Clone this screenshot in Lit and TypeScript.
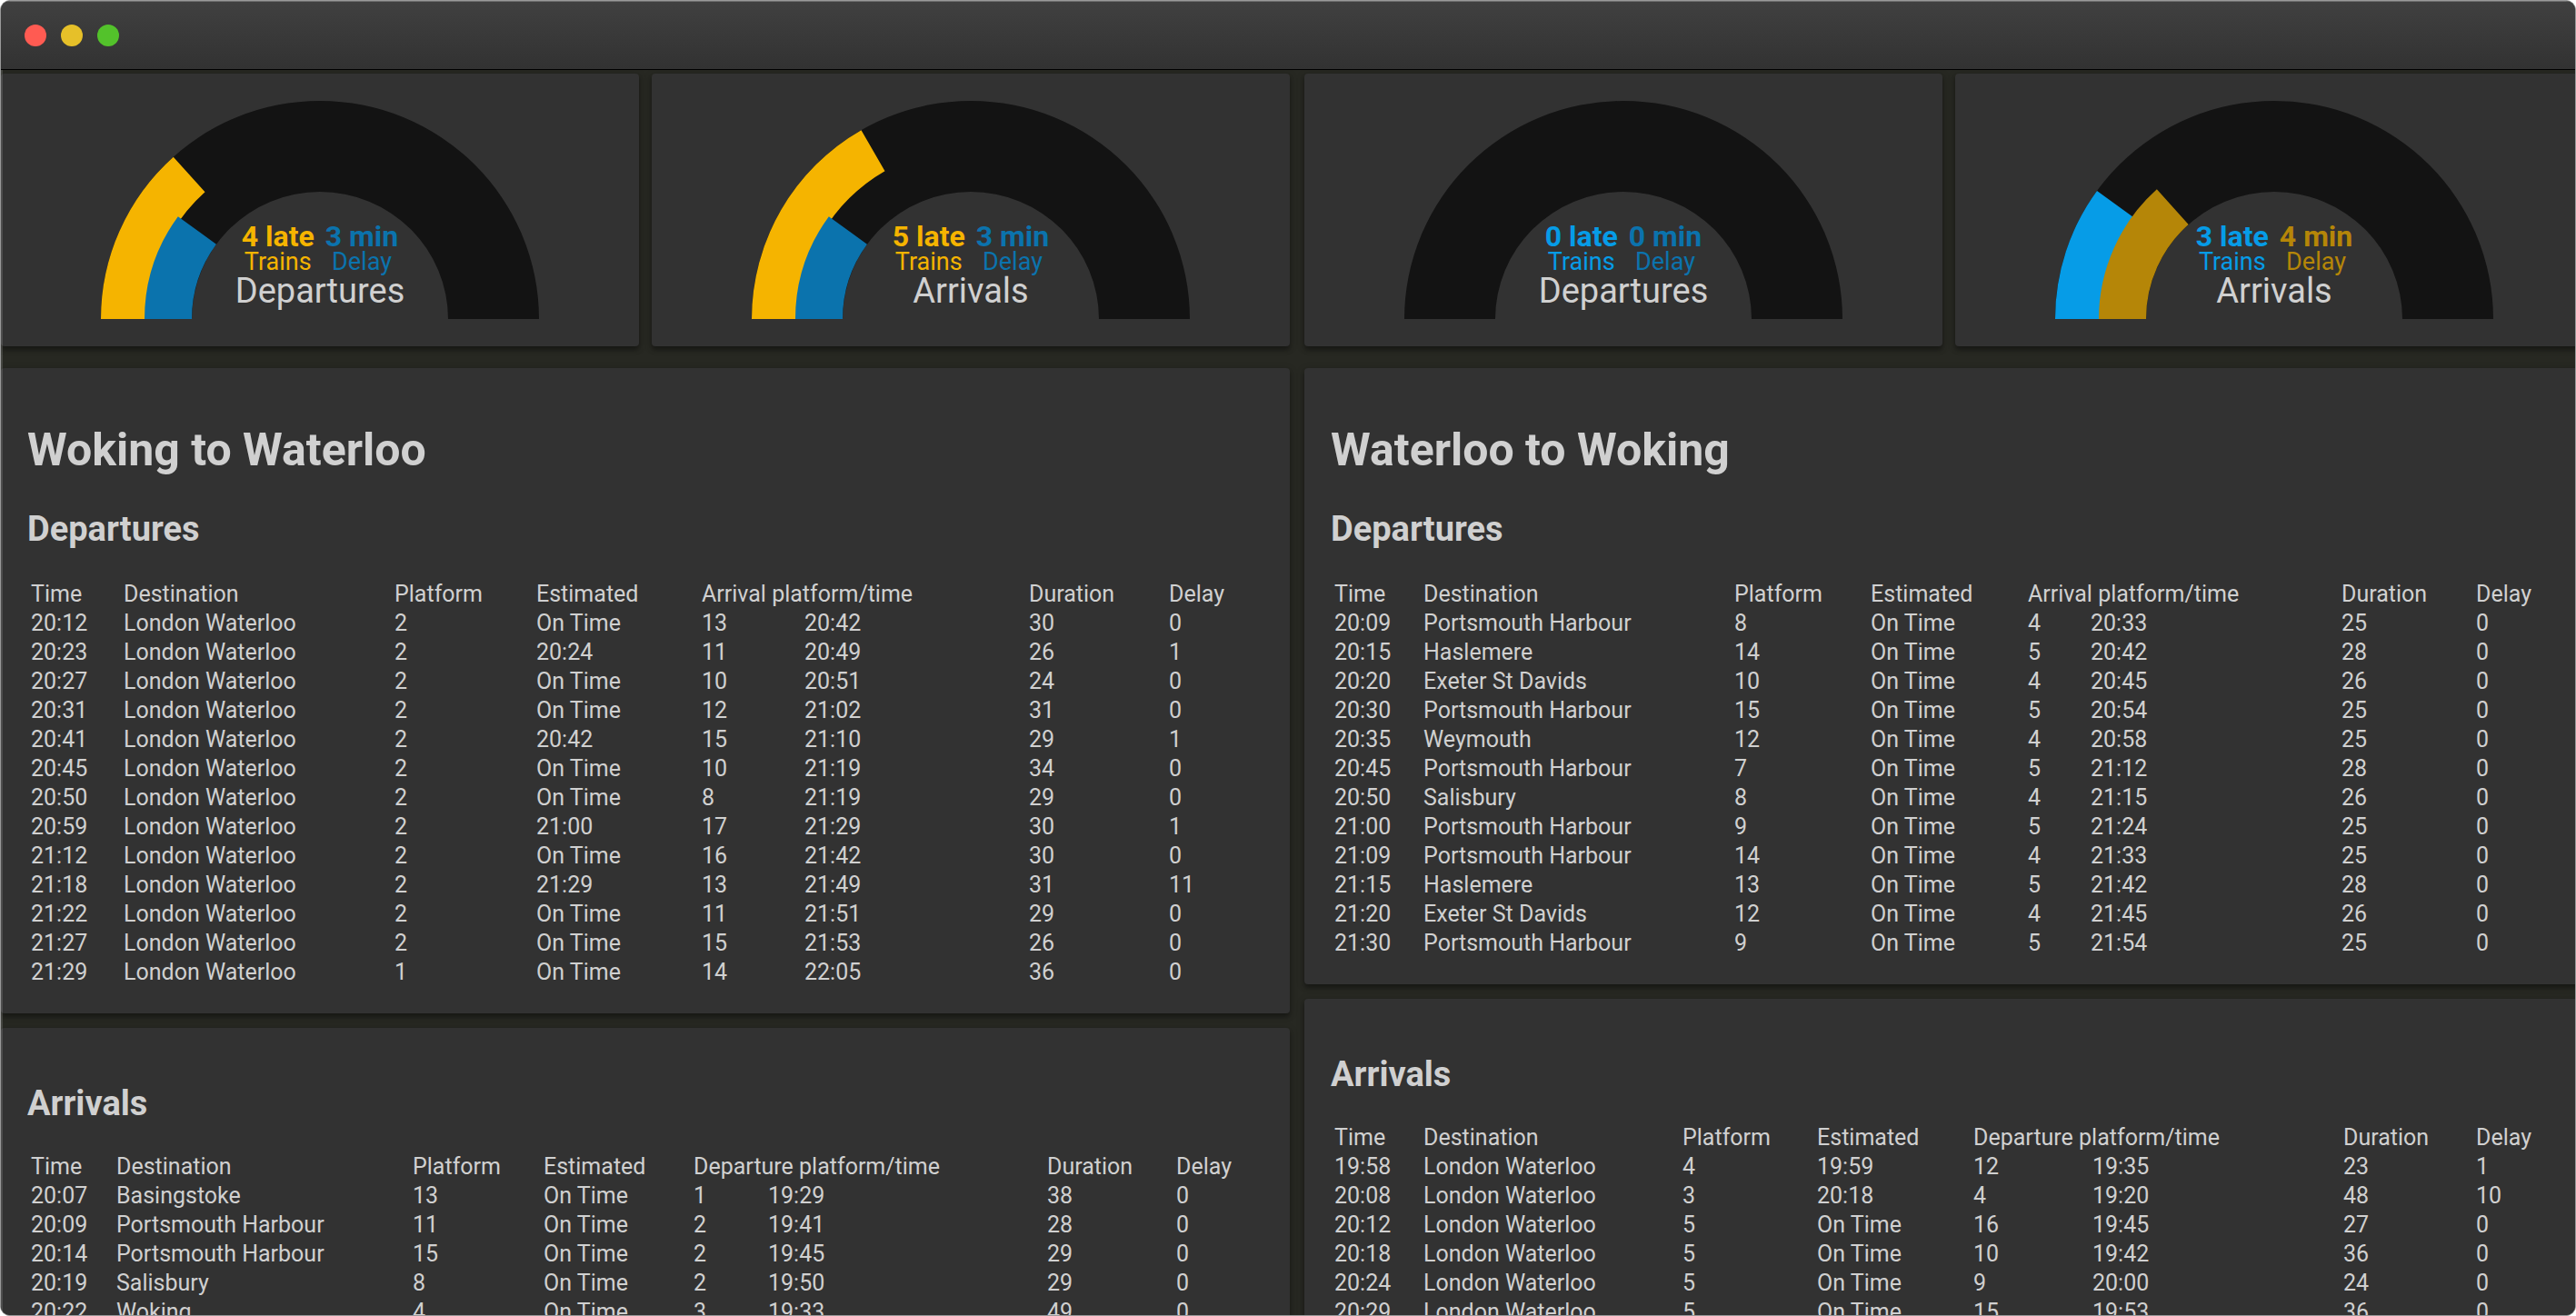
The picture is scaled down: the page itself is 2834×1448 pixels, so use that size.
import { LitElement, html, css, svg } from "lit";
import { customElement, property } from "lit/decorators.js";

type Tone = "amber" | "sky" | "ochre" | "steel";

interface Gauge {
  title: string;
  late: number;
  delay: number;
  lateTone: Tone;
  delayTone: Tone;
}

interface Board {
  title: string;
  via: string;
  /** Column weights; the table scales them to its own width. */
  columns: number[];
  rows: string[][];
}

interface Route {
  name: string;
  gauges: Gauge[];
  boards: Board[];
}

const parse = (text: string): string[][] =>
  text
    .trim()
    .split("\n")
    .map((line) => line.trim().split("|"));

const ROUTES: Route[] = [
  {
    name: "Woking to Waterloo",
    gauges: [
      { title: "Departures", late: 4, delay: 3, lateTone: "amber", delayTone: "steel" },
      { title: "Arrivals", late: 5, delay: 3, lateTone: "amber", delayTone: "steel" },
    ],
    boards: [
      {
        title: "Departures",
        via: "Arrival platform/time",
        columns: [98, 294, 152, 178, 109, 243, 150, 99],
        rows: parse(`
          20:12|London Waterloo|2|On Time|13|20:42|30|0
          20:23|London Waterloo|2|20:24|11|20:49|26|1
          20:27|London Waterloo|2|On Time|10|20:51|24|0
          20:31|London Waterloo|2|On Time|12|21:02|31|0
          20:41|London Waterloo|2|20:42|15|21:10|29|1
          20:45|London Waterloo|2|On Time|10|21:19|34|0
          20:50|London Waterloo|2|On Time|8|21:19|29|0
          20:59|London Waterloo|2|21:00|17|21:29|30|1
          21:12|London Waterloo|2|On Time|16|21:42|30|0
          21:18|London Waterloo|2|21:29|13|21:49|31|11
          21:22|London Waterloo|2|On Time|11|21:51|29|0
          21:27|London Waterloo|2|On Time|15|21:53|26|0
          21:29|London Waterloo|1|On Time|14|22:05|36|0`),
      },
      {
        title: "Arrivals",
        via: "Departure platform/time",
        columns: [90, 322, 140, 161, 78, 303, 138, 91],
        rows: parse(`
          20:07|Basingstoke|13|On Time|1|19:29|38|0
          20:09|Portsmouth Harbour|11|On Time|2|19:41|28|0
          20:14|Portsmouth Harbour|15|On Time|2|19:45|29|0
          20:19|Salisbury|8|On Time|2|19:50|29|0
          20:22|Woking|4|On Time|3|19:33|49|0`),
      },
    ],
  },
  {
    name: "Waterloo to Woking",
    gauges: [
      { title: "Departures", late: 0, delay: 0, lateTone: "sky", delayTone: "steel" },
      { title: "Arrivals", late: 3, delay: 4, lateTone: "sky", delayTone: "ochre" },
    ],
    boards: [
      {
        title: "Departures",
        via: "Arrival platform/time",
        columns: [94, 338, 146, 169, 65, 272, 144, 95],
        rows: parse(`
          20:09|Portsmouth Harbour|8|On Time|4|20:33|25|0
          20:15|Haslemere|14|On Time|5|20:42|28|0
          20:20|Exeter St Davids|10|On Time|4|20:45|26|0
          20:30|Portsmouth Harbour|15|On Time|5|20:54|25|0
          20:35|Weymouth|12|On Time|4|20:58|25|0
          20:45|Portsmouth Harbour|7|On Time|5|21:12|28|0
          20:50|Salisbury|8|On Time|4|21:15|26|0
          21:00|Portsmouth Harbour|9|On Time|5|21:24|25|0
          21:09|Portsmouth Harbour|14|On Time|4|21:33|25|0
          21:15|Haslemere|13|On Time|5|21:42|28|0
          21:20|Exeter St Davids|12|On Time|4|21:45|26|0
          21:30|Portsmouth Harbour|9|On Time|5|21:54|25|0`),
      },
      {
        title: "Arrivals",
        via: "Departure platform/time",
        columns: [94, 281, 144, 168, 127, 272, 142, 95],
        rows: parse(`
          19:58|London Waterloo|4|19:59|12|19:35|23|1
          20:08|London Waterloo|3|20:18|4|19:20|48|10
          20:12|London Waterloo|5|On Time|16|19:45|27|0
          20:18|London Waterloo|5|On Time|10|19:42|36|0
          20:24|London Waterloo|5|On Time|9|20:00|24|0
          20:29|London Waterloo|5|On Time|15|19:53|36|0`),
      },
    ],
  },
];

const GAUGE_MAX = 15;

/** Path of a half-ring segment that starts at the left and sweeps clockwise. */
function segment(outer: number, inner: number, share: number): string {
  const a = Math.PI * share;
  const at = (r: number) => `${241 - (r + 1) * Math.cos(a)} ${240 - r * Math.sin(a)}`;
  return `M${240 - outer} 240A${outer + 1} ${outer} 0 0 1 ${at(outer)}L${at(inner)}A${inner + 1} ${inner} 0 0 0 ${240 - inner} 240Z`;
}

@customElement("delay-gauge")
export class DelayGauge extends LitElement {
  @property({ attribute: false }) gauge!: Gauge;

  static styles = css`
    :host {
      display: grid;
      justify-items: center;
      padding: 30px;
      border-radius: 4px;
      background: #323232;
      box-shadow: 0 4px 5px rgba(0, 0, 0, 0.3), 0 2px 10px rgba(0, 0, 0, 0.2);
    }
    .dial {
      grid-area: 1 / 1;
      display: block;
      width: 482px;
      height: 240px;
    }
    .track { fill: #131313; }
    .amber { fill: #f5b400; color: #f5b400; }
    .sky { fill: #069ce7; color: #069ce7; }
    .ochre { fill: #b58608; color: #b58608; }
    .steel { fill: #0b73ad; color: #0b73ad; }
    .caption {
      grid-area: 1 / 1;
      align-self: end;
      display: flex;
      flex-direction: column;
      align-items: center;
      padding-bottom: 11px;
    }
    .figures {
      display: flex;
      gap: 12px;
    }
    .figure {
      display: flex;
      flex-direction: column;
      align-items: center;
      font-size: 27px;
      line-height: 24px;
    }
    .value {
      font-size: 32px;
      line-height: 32px;
      font-weight: 700;
    }
    .title {
      font-size: 38px;
      line-height: 40px;
      color: #d0d0d0;
    }
  `;

  render() {
    const g = this.gauge;
    return html`
      <svg class="dial" viewBox="0 0 482 240" aria-hidden="true">
        <path class="track" d="M0 240A241 240 0 0 1 482 240H382A141 140 0 0 0 100 240Z"></path>
        ${g.late ? svg`<path class=${g.lateTone} d=${segment(240, 188, g.late / GAUGE_MAX)}></path>` : null}
        ${g.delay ? svg`<path class=${g.delayTone} d=${segment(192, 140, g.delay / GAUGE_MAX)}></path>` : null}
      </svg>
      <div class="caption">
        <div class="figures">
          <div class="figure ${g.lateTone}">
            <span class="value">${g.late} late</span>
            <span>Trains</span>
          </div>
          <div class="figure ${g.delayTone}">
            <span class="value">${g.delay} min</span>
            <span>Delay</span>
          </div>
        </div>
        <div class="title">${g.title}</div>
      </div>
    `;
  }
}

@customElement("train-board")
export class TrainBoard extends LitElement {
  @property({ attribute: false }) board!: Board;
  @property() heading = "";

  static styles = css`
    :host {
      display: block;
      padding: 59px 30px 27px 29px;
      border-radius: 4px;
      background: #323232;
      box-shadow: 0 4px 5px rgba(0, 0, 0, 0.3), 0 2px 10px rgba(0, 0, 0, 0.2);
    }
    .route {
      margin: 0 0 32px;
      font-size: 50px;
      line-height: 62px;
      font-weight: 700;
    }
    .title {
      margin: 0 0 28px;
      font-size: 38px;
      line-height: 48px;
      font-weight: 700;
    }
    .route + .title {
      margin-bottom: 30px;
    }
    .trains {
      width: 100%;
      table-layout: fixed;
      border-collapse: separate;
      border-spacing: 4px;
      line-height: 28px;
      white-space: nowrap;
    }
    .trains th,
    .trains td {
      padding: 0;
      font-weight: 400;
      text-align: left;
    }
  `;

  render() {
    const b = this.board;
    return html`
      ${this.heading ? html`<h1 class="route">${this.heading}</h1>` : null}
      <h2 class="title" id="title">${b.title}</h2>
      <table class="trains" aria-labelledby="title">
        <colgroup>
          ${b.columns.map((width) => html`<col style="width: ${width}px" />`)}
        </colgroup>
        <thead>
          <tr>
            <th>Time</th>
            <th>Destination</th>
            <th>Platform</th>
            <th>Estimated</th>
            <th colspan="2">${b.via}</th>
            <th>Duration</th>
            <th>Delay</th>
          </tr>
        </thead>
        <tbody>
          ${b.rows.map((row) => html`<tr>${row.map((cell) => html`<td>${cell}</td>`)}</tr>`)}
        </tbody>
      </table>
    `;
  }
}

@customElement("app-root")
export class AppRoot extends LitElement {
  static styles = css`
    :host {
      display: block;
      height: 100vh;
      background: #fff;
    }
    .window {
      box-sizing: border-box;
      display: flex;
      flex-direction: column;
      height: 100%;
      overflow: hidden;
      border: 1px solid #999;
      border-radius: 11px;
      background: #272822;
      color: #d0d0d0;
      font: 25px Roboto, sans-serif;
    }
    .titlebar {
      flex: none;
      display: flex;
      align-items: center;
      gap: 16px;
      box-sizing: border-box;
      height: 76px;
      padding: 0 26px;
      border-top: 1px solid #6e6e6e;
      border-bottom: 1px solid #000;
      background: linear-gradient(#404040, #323232);
    }
    .light {
      width: 24px;
      height: 24px;
      padding: 0;
      border: 0;
      border-radius: 50%;
    }
    .close { background: #ff5b52; }
    .minimise { background: #e6c029; }
    .zoom { background: #53c22b; }
    .page {
      position: relative;
      flex: 1;
      min-height: 0;
      overflow: hidden;
    }
    .page::after {
      content: "";
      position: absolute;
      inset: 0 auto 0 0;
      width: 2px;
      background: rgba(255, 255, 255, 0.14);
    }
    .routes {
      display: grid;
      grid-template-columns: 1fr 1fr;
      gap: 16px;
      width: calc(100% + 20px);
      padding-top: 4px;
    }
    .route {
      display: flex;
      flex-direction: column;
      gap: 16px;
    }
    .gauges {
      display: grid;
      grid-template-columns: 1fr 1fr;
      gap: 14px;
      padding-bottom: 8px;
    }
  `;

  render() {
    return html`
      <div class="window">
        <header class="titlebar">
          <button class="light close" aria-label="Close"></button>
          <button class="light minimise" aria-label="Minimise"></button>
          <button class="light zoom" aria-label="Zoom"></button>
        </header>
        <main class="page">
          <div class="routes">
            ${ROUTES.map(
              (route) => html`
                <section class="route">
                  <div class="gauges">
                    ${route.gauges.map((g) => html`<delay-gauge .gauge=${g}></delay-gauge>`)}
                  </div>
                  ${route.boards.map(
                    (b, i) => html`<train-board .board=${b} heading=${i === 0 ? route.name : ""}></train-board>`,
                  )}
                </section>
              `,
            )}
          </div>
        </main>
      </div>
    `;
  }
}
